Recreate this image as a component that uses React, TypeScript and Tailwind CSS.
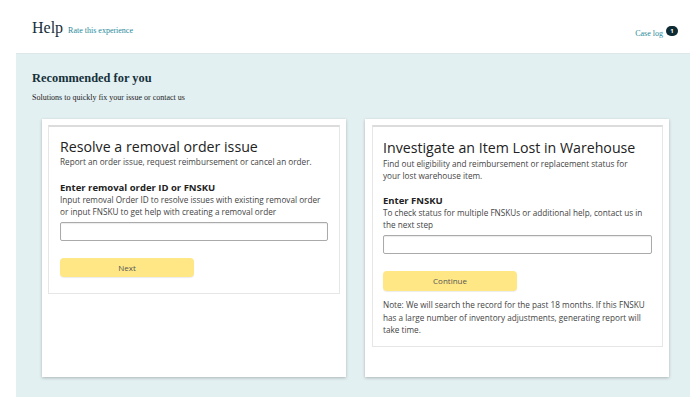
import React from "react";

const sans = { fontFamily: '"Open Sans", "Noto Sans", sans-serif' };
const serif = { fontFamily: '"Liberation Serif", "Times New Roman", serif' };

export default function App() {
  return (
    <div className="w-[698px] h-[407px] bg-white overflow-hidden relative" style={serif}>
      <header className="h-[53px] flex items-start relative">
        <div className="flex items-baseline ml-[32px] mt-[19px]">
          <span className="text-[16px] leading-[18px] text-[#16303a]">Help</span>
          <span className="ml-[5px] text-[8px] text-[#1f8a9c]">Rate this experience</span>
        </div>
        <div className="ml-auto mr-[20px] mt-[26px] flex items-start">
          <span className="text-[8px] leading-[10px] mt-[3px] text-[#1f8a9c]">Case log</span>
          <span className="ml-[3px] w-[12px] h-[10px] rounded-full bg-[#0e2a33] text-white text-[6px] leading-[10px] font-bold flex items-center justify-center" style={sans}>1</span>
        </div>
      </header>
      <section className="ml-[16px] mr-[8px] h-[344px] bg-[#e3f0f2] border-t border-[#dde7ea] pt-[16px]">
        <h2 className="ml-[16px] text-[12.4px] leading-[16px] font-bold text-[#16303a]">Recommended for you</h2>
        <p className="ml-[16px] mt-[7px] text-[8px] leading-[10px] text-[#222]">Solutions to quickly fix your issue or contact us</p>
        <div className="flex gap-[19px] ml-[26px] mt-[16px]" style={sans}>
          <div className="w-[304px] h-[258px] bg-white shadow-[0_1px_3px_rgba(0,0,0,0.25)] p-[6px]">
            <div className="border border-[#e6e6e6] border-t-2 border-t-[#dcdcdc] pl-[11px] pr-[11px] pt-[10px] pb-[16px]">
              <h3 className="text-[14.2px] leading-[19px] text-[#222]">Resolve a removal order issue</h3>
              <p className="text-[8.2px] leading-[11px] text-[#444]">Report an order issue, request reimbursement or cancel an order.</p>
              <h4 className="mt-[15px] text-[9.5px] leading-[12px] font-bold text-[#222]">Enter removal order ID or FNSKU</h4>
              <p className="text-[8.2px] leading-[12px] text-[#444]">Input removal Order ID to resolve issues with existing removal order or input FNSKU to get help with creating a removal order</p>
              <div className="mt-[4px] w-[268px] h-[19px] border border-[#aaa] rounded-[2px] shadow-[inset_0_1px_1px_rgba(0,0,0,0.08)]" />
              <button className="mt-[17px] block w-[134px] h-[19px] rounded-[4px] bg-[#ffe785] text-[8px] text-[#555] shadow-[0_1px_1px_rgba(0,0,0,0.08)]">Next</button>
            </div>
          </div>
          <div className="w-[304px] h-[258px] bg-white shadow-[0_1px_3px_rgba(0,0,0,0.25)] pt-[6px] pl-[7px] pr-[6px]">
            <div className="border border-[#e6e6e6] border-t-2 border-t-[#dcdcdc] pl-[10px] pr-[11px] pt-[11px] pb-[9px]">
              <h3 className="text-[14.2px] leading-[19px] text-[#222]">Investigate an Item Lost in Warehouse</h3>
              <p className="mt-[1px] max-w-[258px] text-[8.2px] leading-[12px] text-[#444]">Find out eligibility and reimbursement or replacement status for your lost warehouse item.</p>
              <h4 className="mt-[13px] text-[9.5px] leading-[12px] font-bold text-[#222]">Enter FNSKU</h4>
              <p className="text-[8.2px] leading-[12px] text-[#444]">To check status for multiple FNSKUs or additional help, contact us in the next step</p>
              <div className="mt-[4px] w-[269px] h-[19px] border border-[#aaa] rounded-[2px] shadow-[inset_0_1px_1px_rgba(0,0,0,0.08)]" />
              <button className="mt-[17px] block w-[134px] h-[20px] rounded-[4px] bg-[#ffe785] text-[8px] text-[#555] shadow-[0_1px_1px_rgba(0,0,0,0.08)]">Continue</button>
              <p className="mt-[8px] text-[8.2px] leading-[12.5px] text-[#444]">Note: We will search the record for the past 18 months. If this FNSKU has a large number of inventory adjustments, generating report will take time.</p>
            </div>
          </div>
        </div>
      </section>
    </div>
  );
}
